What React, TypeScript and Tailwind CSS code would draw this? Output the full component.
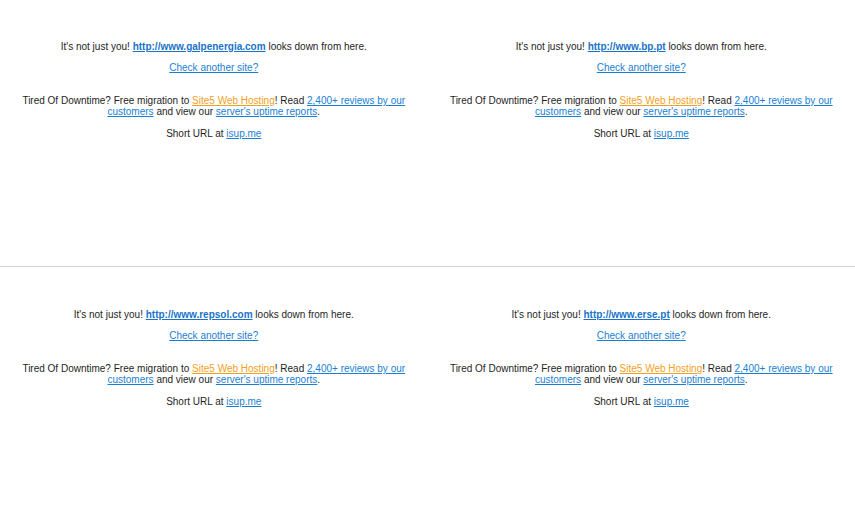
const sites = [
  ["http://www.galpenergia.com", "http://www.bp.pt"],
  ["http://www.repsol.com", "http://www.erse.pt"],
];

function Panel({ url, lower }: { url: string; lower?: boolean }) {
  return (
    <div
      className={
        lower
          ? "px-[10px] pt-[42px] text-center text-[10px] leading-[11px] text-[#1e1e1e]"
          : "px-[10px] pt-[41px] text-center text-[10px] leading-[11px] text-[#1e1e1e]"
      }
    >
      <p>
        It's not just you!{" "}
        <a href="#" className="font-bold text-[#1a73c8] underline">
          {url}
        </a>{" "}
        looks down from here.
      </p>
      <p className="mt-[10px]">
        <a href="#" className="text-[#1a7fd4] underline">
          Check another site?
        </a>
      </p>
      <p className="mt-[22px]">
        Tired Of Downtime? Free migration to{" "}
        <a href="#" className="text-[#f2a01e] underline">
          Site5 Web Hosting
        </a>
        ! Read{" "}
        <a href="#" className="text-[#1a7fd4] underline">
          2,400+ reviews by our customers
        </a>{" "}
        and view our{" "}
        <a href="#" className="text-[#1a7fd4] underline">
          server's uptime reports
        </a>
        .
      </p>
      <p className="mt-[11px]">
        Short URL at{" "}
        <a href="#" className="text-[#1a7fd4] underline">
          isup.me
        </a>
      </p>
    </div>
  );
}

export default function App() {
  return (
    <div className="h-[525px] w-[855px] bg-white font-['Liberation_Sans',Arial,sans-serif]">
      {sites.map((row, i) => (
        <div
          key={i}
          className={i === 0 ? "grid h-[267px] grid-cols-2 border-b border-[#d4d4d4]" : "grid h-[258px] grid-cols-2"}
        >
          {row.map((url) => (
            <Panel key={url} url={url} lower={i === 1} />
          ))}
        </div>
      ))}
    </div>
  );
}
